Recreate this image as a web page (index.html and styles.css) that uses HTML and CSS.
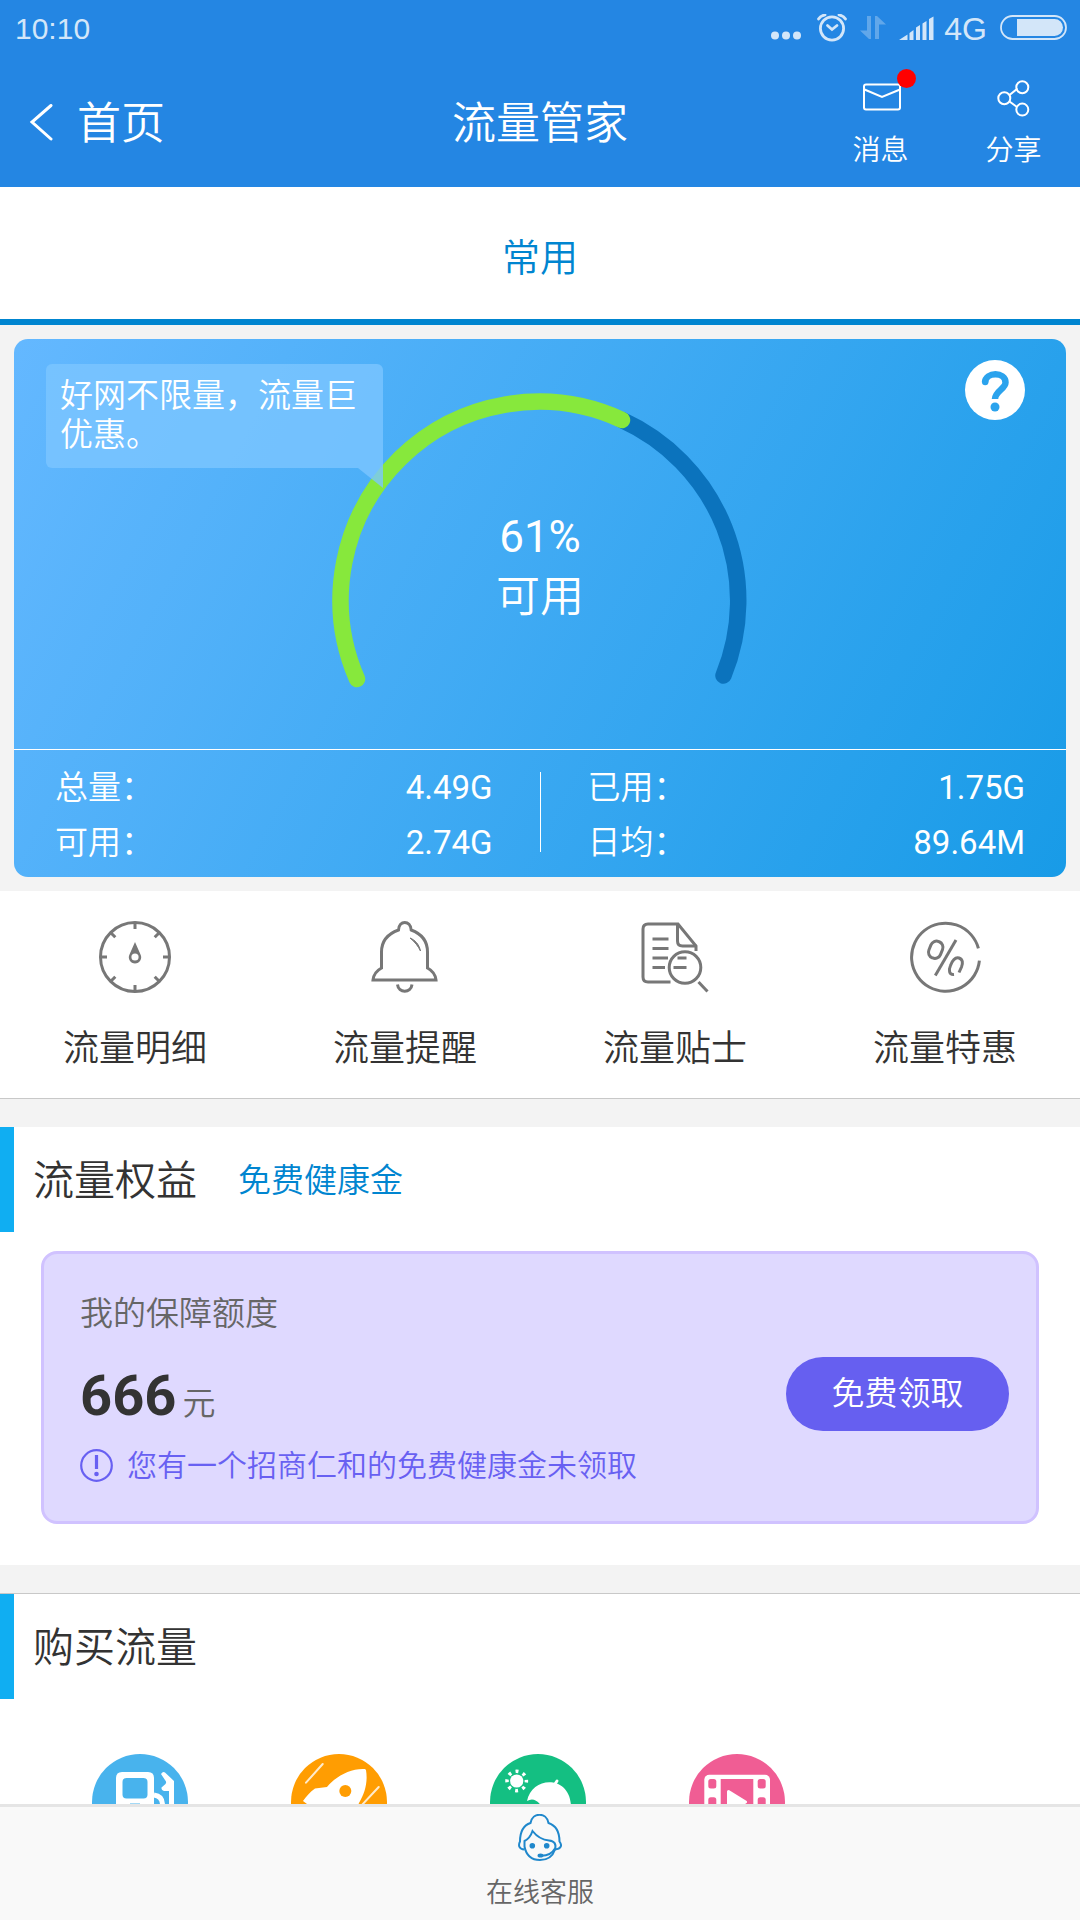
FILE: index.html
```html
<!DOCTYPE html>
<html lang="zh-CN">
<head>
<meta charset="utf-8">
<meta name="viewport" content="width=device-width, initial-scale=1">
<title>流量管家</title>
<link rel="stylesheet" href="styles.css">
</head>
<body class="app">
<header class="top">
  <div class="status">
    <span class="status-time">10:10</span>
    <div class="status-icons">
      <svg width="30" height="30" viewBox="0 0 30 30" fill="currentColor"><circle cx="4" cy="21.500" r="4"/><circle cx="15" cy="21.500" r="4"/><circle cx="26" cy="21.500" r="4"/></svg>
      <svg class="alarm" width="30" height="30" viewBox="0 0 30 30" fill="none" stroke="currentColor" stroke-width="2.800" stroke-linecap="round"><circle cx="15" cy="14.500" r="11.600"/><path d="M1.500 5C3 2.500 5 1.500 8 .8M28.500 5C27 2.500 25 1.500 22 .8"/><path d="M10.500 11.500l4.500 4 5-4"/></svg>
      <svg class="transfer" width="26" height="30" viewBox="0 0 26 30" fill="currentColor"><path d="M7 2h4v23H9L0 16.500h7zM15 25h4V10.500h7L17 2h-2z"/></svg>
      <svg class="signal" width="35" height="30" viewBox="0 0 35 30" fill="currentColor"><path d="M0 26L8.500 20.500v5.500zM10.500 19l4-3v10h-4zM17 13.500l4-2.500v15h-4zM23.500 9.500l4-2.500v19h-4zM30 5L34.500 2.500v23.500H30z"/></svg>
      <span class="network">4G</span>
      <svg class="battery" width="67" height="30" viewBox="0 0 67 30"><rect x="1" y="2" width="65" height="23" rx="11.500" fill="none" stroke="currentColor" stroke-width="1.800"/><path d="M17 5h37.500a8.500 8.500 0 0 1 0 17H17z" fill="currentColor"/></svg>
    </div>
  </div>
  <nav class="nav">
    <a class="back" href="#home">
      <svg width="24" height="38" viewBox="0 0 24 38" fill="none" stroke="currentColor" stroke-width="3" stroke-linecap="round"><path d="M22 1.500L3 18l19 17"/></svg>
      <span>首页</span>
    </a>
    <h1 class="nav-title">流量管家</h1>
    <div class="nav-actions">
      <button class="nav-action" type="button">
        <span class="nav-icon">
          <svg width="40" height="40" viewBox="0 0 40 40" fill="none" stroke="currentColor" stroke-width="2"><rect x="3" y="6.500" width="36" height="25" rx="2"/><path d="M3.500 11.500L21 19l18-7.500"/></svg>
          <span class="dot"></span>
        </span>
        消息
      </button>
      <button class="nav-action" type="button">
        <span class="nav-icon">
          <svg width="40" height="40" viewBox="0 0 40 40" fill="none" stroke="currentColor" stroke-width="2"><circle cx="10.300" cy="20.300" r="6"/><circle cx="28.300" cy="9.300" r="6"/><circle cx="28.300" cy="31.600" r="6"/><path d="M15.500 17l8-6.500M15.500 23.500l7.500 5.500"/></svg>
        </span>
        分享
      </button>
    </div>
  </nav>
</header>

<main class="content">
  <nav class="tabs"><a class="tab" href="#common">常用</a></nav>

  <section class="usage">
    <div class="gauge">
      <svg class="gauge-arc" width="430" height="310" viewBox="0 0 430 310" fill="none" stroke-width="16.500" stroke-linecap="round">
        <path d="M297 35A198.300 198.300 0 0 1 398.500 290.500" stroke="#0b73bd"/>
        <path d="M32 294A198.300 198.300 0 0 1 297 35" stroke="#87e83c"/>
      </svg>
      <p class="gauge-text"><span class="number">61%</span><br>可用</p>
      <p class="bubble">好网不限量，流量巨优惠。</p>
      <button class="help" type="button" aria-label="帮助">
        <svg width="60" height="60" viewBox="0 0 60 60"><circle cx="30" cy="30" r="30" fill="#fff"/><path d="M20 22.500C20.500 11.500 40.500 11.500 40.500 22.500C40.500 29 30 31 30 39" fill="none" stroke="#2ba3ed" stroke-width="6.500" stroke-linecap="butt"/><circle cx="20.200" cy="22" r="3.200" fill="#2ba3ed"/><circle cx="30" cy="47" r="4.500" fill="#2ba3ed"/></svg>
      </button>
    </div>
    <div class="stats">
      <dl class="stat-list">
        <dt>总量：</dt><dd class="number">4.49G</dd>
        <dt>可用：</dt><dd class="number">2.74G</dd>
      </dl>
      <span class="stats-divider"></span>
      <dl class="stat-list">
        <dt>已用：</dt><dd class="number">1.75G</dd>
        <dt>日均：</dt><dd class="number">89.64M</dd>
      </dl>
    </div>
  </section>

  <nav class="shortcuts">
    <a class="shortcut" href="#detail">
      <svg width="72" height="72" viewBox="0 0 72 72" fill="none" stroke="currentColor" stroke-width="3"><circle cx="36" cy="36" r="34.500"/><path d="M36 1v7M36 64v7M1 36h7M64 36h7M11.300 11.300l5 5M60.700 11.300l-5 5M11.300 60.700l5-5M60.700 60.700l-5-5"/><path d="M36 21l5.500 12.500a6.200 6.200 0 1 1-11 0zM36 32.400a3.600 3.600 0 1 0 0 7.200 3.600 3.600 0 1 0 0-7.200z" fill="currentColor" fill-rule="evenodd" stroke="none"/></svg>
      流量明细
    </a>
    <a class="shortcut" href="#remind">
      <svg width="72" height="72" viewBox="0 0 72 72" fill="none" stroke="currentColor" stroke-width="3"><path d="M29.500 9C30 -1 41.500 -1 42.200 9C53 13 58.500 21 58.500 31V47C64 50 66.500 54 67 59H4C4.500 54 7 50 12.500 47V31C12.500 21 18.500 13 29.500 9z"/><path d="M28.500 63.500c1 9 13.500 9 14.500 0"/><path d="M41 17c5 2 9 6 10.500 13-2.500-5-5.500-9-10.500-13z" fill="currentColor" stroke-width="1"/></svg>
      流量提醒
    </a>
    <a class="shortcut" href="#tips">
      <svg width="72" height="72" viewBox="0 0 72 72" fill="none" stroke="currentColor" stroke-width="3"><path d="M57 30v-5L39 3H9Q4 3 4 8v48q0 5 5 5H31.500"/><path d="M38.500 3.500V20q0 5 5 5h14"/><path d="M13.500 18h16M13.500 27.500h16M13.500 37H29M13.500 46.500h12.500M38.500 37h9M34.500 46.500h13"/><circle cx="46" cy="46.500" r="15.800"/><path d="M59.500 61l9 9.500"/></svg>
      流量贴士
    </a>
    <a class="shortcut" href="#offers">
      <svg width="72" height="72" viewBox="0 0 72 72" fill="none" stroke="currentColor" stroke-width="3"><path d="M69.400 27.300A34 34 0 1 0 70.400 39.700"/><path d="M47 19L26.300 54.500"/><rect x="20.500" y="20" width="12.500" height="17.500" rx="6" transform="rotate(22 26.700 28.700)"/><path d="M45 53.500C40 54 39.500 49 41.500 44.500C44 38 46.500 36 50 37C54 38.500 54 42 52.500 46L50 51.500"/></svg>
      流量特惠
    </a>
  </nav>

  <section class="panel rights">
    <div class="panel-head">
      <h2 class="panel-title">流量权益</h2>
      <a class="panel-link" href="#health">免费健康金</a>
    </div>
    <div class="cover">
      <div class="cover-info">
        <p class="cover-label">我的保障额度</p>
        <p class="cover-amount"><strong>666</strong>元</p>
        <p class="cover-note">
          <svg width="33" height="33" viewBox="0 0 33 33" fill="none" stroke="currentColor"><circle cx="16.500" cy="16.500" r="15.300" stroke-width="2.200"/><path d="M16.500 6v14" stroke-width="3.200"/><circle cx="16.500" cy="25" r="2.300" fill="currentColor" stroke="none"/></svg>
          您有一个招商仁和的免费健康金未领取
        </p>
      </div>
      <button class="claim" type="button">免费领取</button>
    </div>
  </section>

  <section class="panel buy">
    <div class="panel-head"><h2 class="panel-title">购买流量</h2></div>
    <div class="packs">
      <a class="pack" href="#fuel" aria-label="加油包">
        <svg width="96" height="96" viewBox="0 0 96 96"><circle cx="48" cy="48" r="48" fill="#48b3ed"/><path d="M30 18h26q6 0 6 6v54H24V24q0-6 6-6z" fill="#fff"/><rect x="30.500" y="24" width="25" height="20.500" rx="4" fill="#48b3ed"/><path d="M38 50.500h10" stroke="#48b3ed" stroke-width="2"/><path d="M62 41q8.500 1 8.500 10v15q9 6 9-4V29" fill="none" stroke="#fff" stroke-width="5"/><path d="M69 20q2-3 4-1.500L82 27v8h-5v2h-5q-3-1-2.500-3.500l4-3.500q1.500-2-.5-4z" fill="#fff"/></svg>
      </a>
      <a class="pack" href="#boost" aria-label="加速包">
        <svg width="96" height="96" viewBox="0 0 96 96"><circle cx="48" cy="48" r="48" fill="#ff9d02"/><path d="M74 15C60 14 45 22 36 33L24 34.500C19 38 15 43 12 47l8 6 6 10 18 16 16-12 8-18C74 39 77 28 75 16z" fill="#fff"/><circle cx="54.300" cy="37" r="6" fill="#ff9d02"/><path d="M31.700 10L15 28.700M87.700 33L70 52" stroke="#fff" stroke-opacity=".8" stroke-width="2" stroke-linecap="round"/></svg>
      </a>
      <a class="pack" href="#holiday" aria-label="假日包">
        <svg width="96" height="96" viewBox="0 0 96 96"><circle cx="48" cy="48" r="48" fill="#14bf82"/><circle cx="26.700" cy="27" r="6.600" fill="#fff"/><circle cx="26.700" cy="27" r="9.700" fill="none" stroke="#fff" stroke-width="3.500" stroke-dasharray="3 4.618" stroke-dashoffset="1.500"/><path d="M37 47C42 21 81 21 81 53H52Q45 42 37 47z" fill="#fff"/><path d="M65 30l2-3" stroke="#fff" stroke-width="3" stroke-linecap="round"/></svg>
      </a>
      <a class="pack" href="#video" aria-label="视频包">
        <svg width="96" height="96" viewBox="0 0 96 96"><circle cx="48" cy="48" r="48" fill="#f05d94"/><rect x="15.300" y="20.700" width="65.700" height="54" rx="5" fill="#fff"/><g fill="#f05d94"><rect x="31.700" y="25" width="32.600" height="45"/><rect x="19.300" y="25" width="8" height="9.500" rx="2.500"/><rect x="19.300" y="43.300" width="8" height="9.500" rx="2.500"/><rect x="68.700" y="25" width="8" height="9.500" rx="2.500"/><rect x="68.700" y="43.300" width="8" height="9.500" rx="2.500"/></g><path d="M39.500 37.500l17 10.500-17 10.500z" fill="#fff" stroke="#fff" stroke-width="3" stroke-linejoin="round"/></svg>
      </a>
    </div>
  </section>
</main>

<footer class="service">
  <a class="service-link" href="#service">
    <svg width="44" height="47" viewBox="0 0 44 47" fill="none" stroke="#2088cc" stroke-width="2"><path d="M6.500 35.500C1 35 0 31.500 2 27.500C2 18 5 11.500 12.500 9C14.500 -2 28.500 -2 30.500 9C38 11.500 41.500 18 41.500 27.500C44.500 31.500 43 35 37 35.500"/><path d="M6.500 32.500v-5.500C10.500 25 13 21.500 14.500 17C20 24 25 26 31 26.500C36.500 27 38.500 30 37 35.500C34.500 43 29 46 22 46C14.500 46 8.500 43 6.500 32.500z"/><path d="M22 41.700C29 42 34 40 37 34.500"/><ellipse cx="22.500" cy="41.500" rx="2" ry="1" fill="#2088cc"/><circle cx="14.300" cy="31.700" r="1.800" fill="#2088cc"/><circle cx="28.700" cy="31.700" r="1.800" fill="#2088cc"/></svg>
    在线客服
  </a>
</footer>
</body>
</html>
```
FILE: styles.css
```css
* { box-sizing: border-box; }

body, h1, h2, p, dl, dd { margin: 0; }
h1, h2 { font-weight: inherit; }
a { color: inherit; text-decoration: none; }
svg { display: block; flex: none; }
button {
  padding: 0;
  border: 0;
  background: none;
  color: inherit;
  font: inherit;
}

.app {
  display: flex;
  flex-direction: column;
  height: 100vh;
  background: #f3f3f3;
  color: #333;
  font-family: Roboto, "Noto Sans CJK SC", sans-serif;
  font-weight: 350;
}
.number { font-weight: 400; }

/* Top bar */
.top { background: #2486e3; color: #fff; }
.status {
  display: flex;
  align-items: center;
  justify-content: space-between;
  height: 56px;
  padding: 2px 13px 0 15px;
  color: #d3e6f9;
  font-family: "Liberation Sans", sans-serif;
  font-size: 30px;
}
.status-icons { display: flex; align-items: center; }
.alarm { margin-left: 16px; }
.transfer { margin-left: 13px; opacity: .35; }
.signal { margin-left: 13px; }
.network { margin-left: 10px; font-size: 32px; }
.battery { margin-left: 13px; }

.nav {
  display: grid;
  grid-template-columns: 1fr auto 1fr;
  align-items: center;
  height: 131px;
  padding-top: 2px;
}
.back {
  display: flex;
  align-items: center;
  gap: 24px;
  padding-left: 29px;
  font-size: 44px;
  line-height: 60px;
}
.nav-title {
  padding-top: 2px;
  font-size: 44px;
  line-height: 60px;
}
.back span { padding-top: 2px; }
.nav-actions { display: flex; justify-content: flex-end; }
.nav-action {
  display: flex;
  flex-direction: column;
  align-items: center;
  gap: 17px;
  width: 133px;
  font-size: 28px;
  line-height: 32px;
}
.nav-icon { position: relative; }
.dot {
  position: absolute;
  top: -9px;
  left: 36px;
  width: 19px;
  height: 19px;
  border-radius: 50%;
  background: #f00;
}

/* Scrolling content */
.content {
  flex: 1;
  min-height: 0;
  overflow-y: auto;
  scrollbar-width: none;
}
.tabs {
  display: flex;
  border-bottom: 6px solid #0085d0;
  background: #fff;
}
.tab {
  flex: 1;
  padding: 11px 0 1px;
  color: #0085d0;
  font-size: 38px;
  line-height: 120px;
  text-align: center;
}

/* Usage card */
.usage {
  margin: 14px;
  border-radius: 14px;
  background: linear-gradient(118deg, #64b8ff, #189be7);
  color: #fff;
}
.gauge {
  position: relative;
  display: grid;
  justify-items: center;
  height: 410px;
  padding-top: 46px;
}
.gauge-arc, .gauge-text { grid-area: 1 / 1; }
.gauge-text {
  padding-top: 122px;
  font-size: 44px;
  line-height: 60px;
  text-align: center;
}
.bubble {
  position: absolute;
  top: 25px;
  left: 32px;
  width: 337px;
  height: 104px;
  padding: 12px 14px;
  border-radius: 6px 6px 0 6px;
  background: rgba(124, 198, 255, .8);
  font-size: 33px;
  line-height: 39px;
}
.bubble::after {
  content: "";
  position: absolute;
  top: 100%;
  right: 0;
  width: 25px;
  height: 20px;
  background: inherit;
  clip-path: polygon(0 0, 100% 0, 100% 100%);
}
.help {
  position: absolute;
  top: 21px;
  right: 41px;
}
.stats {
  display: grid;
  grid-template-columns: 1fr 1px 1fr;
  padding: 10px 0 7px;
  border-top: 1px solid #fff;
}
.stats-divider {
  height: 80px;
  margin-top: 12px;
  background: #fff;
}
.stat-list {
  display: grid;
  grid-template-columns: auto 1fr;
  padding: 0 41px 0 47px;
  font-size: 33px;
  line-height: 55px;
}
.stat-list:first-child { padding: 0 47px 0 41px; }
.stat-list dd { text-align: right; }

/* Shortcuts */
.shortcuts {
  display: flex;
  border-bottom: 1px solid #c8c8c8;
  background: #fff;
}
.shortcut {
  flex: 1;
  display: flex;
  flex-direction: column;
  align-items: center;
  gap: 29px;
  padding: 30px 0 22px;
  font-size: 36px;
  line-height: 54px;
}
.shortcut svg { color: #777; }

/* Titled panels */
.panel { margin-top: 28px; background: #fff; }
.panel-head {
  display: flex;
  align-items: center;
  gap: 41px;
  height: 105px;
  padding: 2px 0 0 19px;
  border-left: 14px solid #10aef2;
  line-height: 60px;
}
.panel-title { font-size: 41px; }
.panel-link { color: #0085d0; font-size: 33px; }

/* Health cover card */
.rights { padding-bottom: 41px; }
.cover {
  display: flex;
  align-items: center;
  justify-content: space-between;
  margin: 19px 41px 0;
  padding: 35px 27px 33px 36px;
  border: 3px solid #d0c2ff;
  border-radius: 16px;
  background: #dfd9ff;
}
.cover-label {
  color: #666;
  font-size: 33px;
  line-height: 49px;
}
.cover-amount {
  margin-top: 27px;
  color: #666;
  font-size: 33px;
  line-height: 78px;
}
.cover-amount strong {
  margin-right: 6px;
  color: #333;
  font-size: 56px;
  font-weight: 700;
  line-height: 60px;
}
.cover-note {
  display: flex;
  align-items: center;
  gap: 14px;
  color: #6860f2;
  font-size: 30px;
  line-height: 45px;
}
.claim {
  width: 223px;
  height: 74px;
  margin-top: 10px;
  border-radius: 37px;
  background: #665ff0;
  color: #fff;
  font-size: 33px;
  line-height: 74px;
}

/* Data packs */
.buy { border-top: 1px solid #c8c8c8; }
.packs {
  display: flex;
  padding: 55px 45px 40px 40px;
}
.pack {
  flex: 0 0 20%;
  display: flex;
  justify-content: center;
}

/* Service bar */
.service {
  border-top: 3px solid #e5e5e5;
  background: #f9f9f9;
}
.service-link {
  display: flex;
  flex-direction: column;
  align-items: center;
  gap: 12px;
  padding: 7px 0;
  color: #666;
  font-size: 27px;
  line-height: 40px;
}
```
